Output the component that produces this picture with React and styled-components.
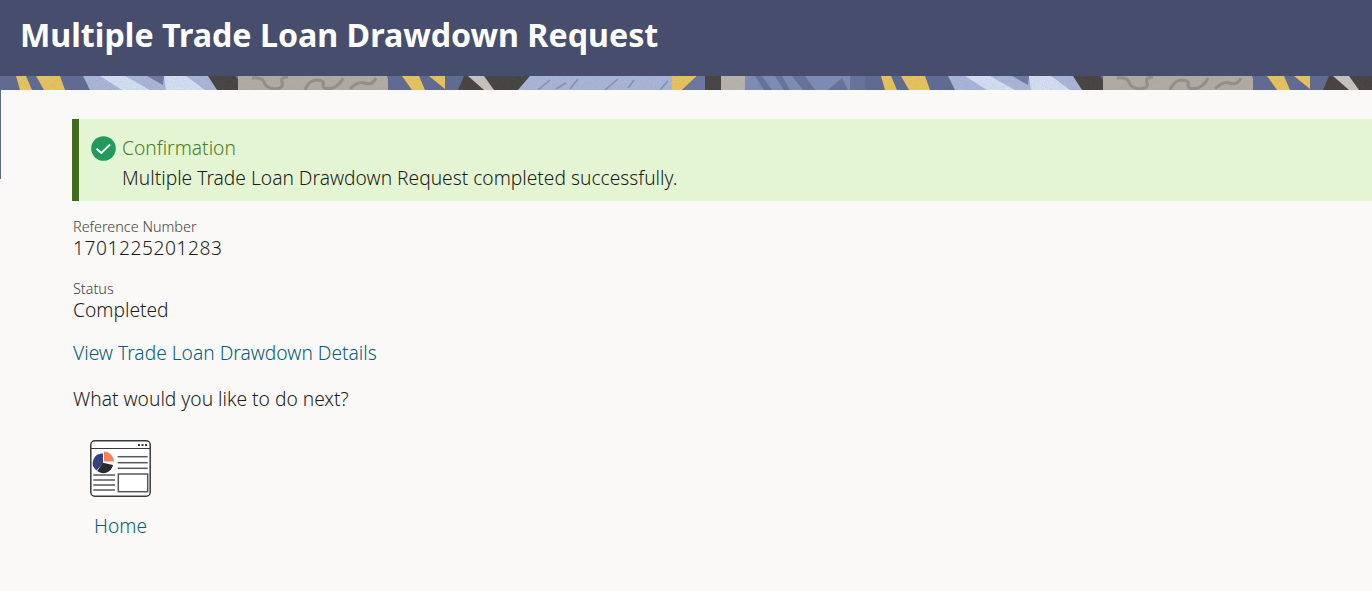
import React from 'react';
import styled, { createGlobalStyle } from 'styled-components';

const GlobalStyle = createGlobalStyle`
  html, body {
    margin: 0;
    height: 100%;
    overflow: hidden;
    background: #faf9f7;
  }
  body {
    font-family: "Noto Sans", "Open Sans", sans-serif;
    color: #1e1c1a;
  }
`;

const TILE = 865;
const OFFSETS = [0, TILE];

// one repeat of the patterned strip under the title bar
const BannerTile = ({ x }) => (
  <g transform={`translate(${x} 0)`}>
    <rect x="0" y="0" width="84" height="14" fill="#5e6a93" />
    <polygon points="16,0 26,0 32,14 20,14" fill="#e8c45c" />
    <polygon points="36,0 60,0 65,14 44,14" fill="#e8c45c" />
    <polygon points="83,0 209,0 218,14 90,14" fill="#a9b6d8" />
    <polygon points="100,0 125,0 150,14 122,14" fill="#d5dff5" />
    <polygon points="147,0 164,0 163,9" fill="#6f7a9f" />
    <polygon points="164,0 186,0 205,14 166,14" fill="#d5dff5" />
    <polygon points="208,0 235,0 246,14 217,14" fill="#454340" />
    <rect x="238" y="0" width="150" height="14" fill="#b3aca3" />
    <g fill="none" stroke="#958f88" strokeWidth="3">
      <path d="M252 2 q10 -1 12 4 q2 6 10 7 q10 0 8 -7 q-2 -5 6 -5" />
      <path d="M305 14 q4 -10 12 -10 q8 0 6 5 q0 5 10 3 q8 -4 10 -10" />
      <path d="M350 13 q8 -8 14 -6 q8 3 12 -5" />
    </g>
    <polygon points="387,0 470,0 460,14 392,14" fill="#5e6a93" />
    <polygon points="402,0 419,0 425,14 412,14" fill="#e8c45c" />
    <polygon points="429,0 445,0 445,13" fill="#e8c45c" />
    <polygon points="458,14 464,0 530,0 518,14" fill="#454340" />
    <polygon points="468,0 484,0 494,14 484,14" fill="#c9c5bd" />
    <polygon points="530,0 672,0 672,14 518,14" fill="#a9b6d8" />
    <g stroke="#8390b5" strokeWidth="1.6">
      <line x1="538" y1="14" x2="550" y2="4" />
      <line x1="556" y1="13" x2="566" y2="7" />
      <line x1="570" y1="13" x2="578" y2="3" />
      <line x1="605" y1="14" x2="618" y2="3" />
      <line x1="628" y1="12" x2="634" y2="4" />
      <line x1="660" y1="14" x2="668" y2="5" />
    </g>
    <polygon points="672,0 697,0 682,14 672,14" fill="#e8c45c" />
    <polygon points="697,0 705,0 705,14 682,14" fill="#6a77a0" />
    <rect x="705" y="0" width="16" height="14" fill="#454340" />
    <rect x="721" y="0" width="24" height="14" fill="#b8b4ab" />
    <rect x="745" y="0" width="136" height="14" fill="#7e8cb5" />
    <g fill="#66729b">
      <polygon points="755,0 762,0 772,14 764,14" />
      <polygon points="775,0 782,0 790,14 784,14" />
      <polygon points="792,0 805,0 815,14 803,14" />
      <polygon points="828,14 842,2 848,14" />
    </g>
    <rect x="850" y="0" width="31" height="14" fill="#66729b" />
  </g>
);

const Page = () => (
  <Wrapper>
    <TitleBar>
      <Title>Multiple Trade Loan Drawdown Request</Title>
    </TitleBar>
    <Banner viewBox="0 0 1372 14" preserveAspectRatio="none" aria-hidden="true">
      <defs>
        <filter id="soften" x="-1%" y="-20%" width="102%" height="140%">
          <feGaussianBlur stdDeviation="0.7" />
        </filter>
        <filter id="grain" x="0" y="0" width="100%" height="100%">
          <feTurbulence type="fractalNoise" baseFrequency="0.9" numOctaves="2" seed="4" />
          <feColorMatrix values="0 0 0 0 0.2  0 0 0 0 0.2  0 0 0 0 0.25  0 0 0 0.9 -0.3" />
        </filter>
      </defs>
      <rect width="1372" height="14" fill="#5e6a93" />
      <g filter="url(#soften)">
        {OFFSETS.map((x) => <BannerTile key={x} x={x} />)}
      </g>
      <rect width="1372" height="14" filter="url(#grain)" opacity="0.35" />
    </Banner>
    <Body>
      <Rail />
      <Main>
        <Notice>
          <NoticeHead>
            <CheckIcon />
            <NoticeTitle>Confirmation</NoticeTitle>
          </NoticeHead>
          <NoticeText>Multiple Trade Loan Drawdown Request completed successfully.</NoticeText>
        </Notice>

        <Field $top={17}>
          <Label>Reference Number</Label>
          <Value $wide>1701225201283</Value>
        </Field>
        <Field $top={20}>
          <Label>Status</Label>
          <Value>Completed</Value>
        </Field>

        <DetailsLink href="#">View Trade Loan Drawdown Details</DetailsLink>
        <Question>What would you like to do next?</Question>

        <Tile href="#">
          <HomeIcon />
          <TileLabel>Home</TileLabel>
        </Tile>
      </Main>
    </Body>
  </Wrapper>
);

const CheckIcon = () => (
  <svg width="25" height="25" viewBox="0 0 25 25" aria-hidden="true">
    <circle cx="12.5" cy="12.5" r="12.3" fill="#239a5c" />
    <path d="M5.5 12.8 L10.4 17 L19.2 8.4" fill="none" stroke="#fff" strokeWidth="2" />
  </svg>
);

const HomeIcon = () => (
  <svg width="61" height="58" viewBox="0 0 61 58" aria-hidden="true">
    <rect x="0.8" y="0.8" width="59.4" height="55.4" rx="4" fill="#fff" stroke="#3a3a3c" strokeWidth="1.5" />
    <line x1="1" y1="8.5" x2="60" y2="8.5" stroke="#3a3a3c" strokeWidth="1.2" />
    <g fill="#3a3a3c">
      <rect x="48" y="4" width="2" height="2" />
      <rect x="51.5" y="4" width="2" height="2" />
      <rect x="55" y="4" width="2" height="2" />
    </g>
    <path d="M13 13.5 A9.5 9.5 0 0 0 6.5 30.5 L13 23.5 Z" fill="#35407f" />
    <path d="M13 22.8 L23 25 A9.8 9.8 0 0 1 7.2 31 Z" fill="#2b2b2d" />
    <path d="M14 11.5 A10.5 10.5 0 0 1 24 21.5 L14 21.5 Z" fill="#f4815a" />
    <g stroke="#57575a" strokeWidth="1.5">
      <line x1="27.7" y1="16.7" x2="57.7" y2="16.7" />
      <line x1="27.7" y1="22.7" x2="57.7" y2="22.7" />
      <line x1="27.7" y1="28.3" x2="57.7" y2="28.3" />
      <line x1="3.3" y1="35" x2="25" y2="35" />
      <line x1="3.3" y1="40" x2="25" y2="40" />
      <line x1="3.3" y1="45" x2="25" y2="45" />
      <line x1="3.3" y1="50" x2="25" y2="50" />
    </g>
    <rect x="28.3" y="34" width="29.4" height="17.7" fill="#fff" stroke="#57575a" strokeWidth="1.5" />
  </svg>
);

const App = () => (
  <>
    <GlobalStyle />
    <Page />
  </>
);

const Wrapper = styled.div`
  display: flex;
  flex-direction: column;
  height: 591px;
  overflow: hidden;
`;

const TitleBar = styled.header`
  display: flex;
  align-items: center;
  height: 76px;
  padding: 0 20px 6px;
  box-sizing: border-box;
  background: #474d6c;
`;

const Title = styled.h1`
  margin: 0;
  font-size: 32.2px;
  font-weight: 700;
  line-height: 40px;
  color: #fff;
  white-space: nowrap;
`;

const Banner = styled.svg`
  display: block;
  flex: none;
  width: 100%;
  height: 14px;
`;

const Body = styled.div`
  display: flex;
  flex: 1;
  align-items: flex-start;
`;

const Rail = styled.div`
  flex: none;
  width: 1px;
  height: 89px;
  background: #5e6a93;
`;

const Main = styled.main`
  display: flex;
  flex: 1;
  flex-direction: column;
  align-items: flex-start;
  padding: 29px 0 0 71px;
`;

const Notice = styled.section`
  align-self: stretch;
  height: 82px;
  padding: 15px 0 0 12px;
  box-sizing: border-box;
  background: #e4f5d3;
  border-left: 7px solid #426d1c;
`;

const NoticeHead = styled.div`
  display: flex;
  align-items: center;
  gap: 6px;
  height: 28px;
`;

const NoticeTitle = styled.span`
  font-size: 19.2px;
  font-weight: 300;
  line-height: 28px;
  color: #4a7d1e;
`;

const NoticeText = styled.div`
  margin-top: 2px;
  padding-left: 31px;
  font-size: 19.2px;
  font-weight: 300;
  line-height: 28px;
  color: #1e1c1a;
`;

const Field = styled.div`
  margin-top: ${(p) => p.$top}px;
  margin-left: 1px;
`;

const Label = styled.div`
  font-size: 14.4px;
  font-weight: 300;
  line-height: 18px;
  color: #45423f;
`;

const Value = styled.div`
  font-size: 19.2px;
  font-weight: 300;
  line-height: 24px;
  color: #1e1c1a;
  letter-spacing: ${(p) => (p.$wide ? '0.55px' : '0')};
`;

const DetailsLink = styled.a`
  margin: 17px 0 0 1px;
  font-size: 19.2px;
  font-weight: 300;
  line-height: 28px;
  color: #075c80;
  text-decoration: none;
`;

const Question = styled.p`
  margin: 18px 0 0 1px;
  font-size: 19.2px;
  font-weight: 300;
  line-height: 28px;
`;

const Tile = styled.a`
  display: flex;
  flex-direction: column;
  align-items: center;
  width: 97px;
  margin-top: 27px;
  color: #075c80;
  text-decoration: none;
`;

const TileLabel = styled.span`
  margin-top: 14px;
  font-size: 19.2px;
  font-weight: 300;
  line-height: 28px;
`;

export default App;
